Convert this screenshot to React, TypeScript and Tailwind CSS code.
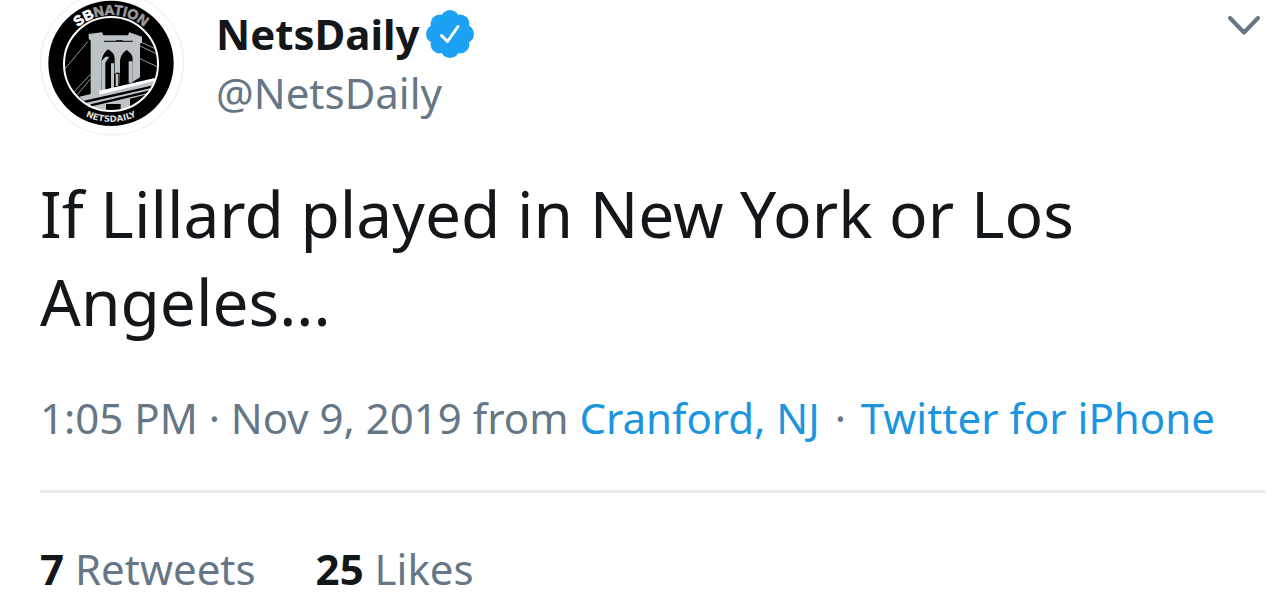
const stats = [
  { count: 7, label: "Retweets" },
  { count: 25, label: "Likes" },
];

const Avatar = () => (
  <svg
    viewBox="28 0 432 408"
    className="w-36 h-[136px] shrink-0"
    role="img"
    aria-label="NetsDaily avatar"
  >
    <defs>
      <clipPath id="inner">
        <circle cx="241" cy="192" r="140" />
      </clipPath>
      <path id="topArc" d="M91 194a150 150 0 0 1 300 0" />
      <path id="bottomArc" d="M65 190a176 176 0 0 0 352 0" />
    </defs>
    <circle cx="244" cy="190" r="214" fill="#fff" stroke="#f3f3f3" strokeWidth="5" />
    <circle cx="241" cy="190" r="188" fill="#000" />

    {/* Bridge */}
    <g clipPath="url(#inner)">
      <g stroke="#aeb4b6" strokeWidth="2.5" fill="none">
        <path d="M98 212 172 124M130 276 180 222M140 284 180 236M326 124l60 28M328 138l60 28M328 176l60 28" />
      </g>
      <path
        fill="#bcc3c7"
        d="M174 102 214 97 218 106H292L296 97 334 110V126L328 132V232L300 250H212V300H176L180 280V122L174 116z"
      />
      <path
        fill="#000"
        d="M212 272v-82c0-18 8-32 20-42 14 8 22 18 20 32v82zM268 256v-70c0-16 8-28 20-36 12 8 20 18 18 34v64z"
      />
      <path fill="#000" d="M250 222h5v-4h12v44h-17z" />
      <path fill="#bcc3c7" d="M212 184l12 -14h12l-12 18v86h-12zM241 190h9v74h-9zM255 222h8v36h-8zM294 184h12v64h-12z" />
      <path d="M220 124h86M256 122h20" stroke="#222" strokeWidth="4" />
      <path fill="#bcc3c7" d="M146 290 390 232v96L300 352H210z" />
      <path fill="#fff" d="M206 272 390 230v8L206 284z" />
      <path d="M160 306 392 254M180 316 392 266" stroke="#000" strokeWidth="7" />
      <path d="M226 312h44v30h-44zM298 296l54 -14v18l-54 22z" fill="#000" />
    </g>
    <circle cx="241" cy="192" r="141" fill="none" stroke="#fff" strokeWidth="6" />

    <text
      fontSize="42"
      className="font-['Liberation_Sans',sans-serif] font-bold"
      textAnchor="middle"
    >
      <textPath href="#topArc" startOffset="50%">
        <tspan fill="#fff" stroke="#fff" strokeWidth="2">SB</tspan>
        <tspan fill="#999" stroke="#999" strokeWidth="2">NATION</tspan>
      </textPath>
    </text>
    <text
      fontSize="26"
      fill="#ddd"
      className="font-['DejaVu_Sans',sans-serif] font-bold"
      textAnchor="middle"
    >
      <textPath href="#bottomArc" startOffset="50%">
        NETSDAILY
      </textPath>
    </text>
  </svg>
);

const VerifiedBadge = () => (
  <svg viewBox="0 0 48 48" className="size-12" role="img" aria-label="Verified account">
    <g fill="#1da1f2">
      <circle cx="24" cy="24" r="18" />
      <circle cx="24" cy="9.5" r="9.5" />
      <circle cx="34" cy="14" r="9.5" />
      <circle cx="38.5" cy="24" r="9.5" />
      <circle cx="34" cy="34" r="9.5" />
      <circle cx="24" cy="38.5" r="9.5" />
      <circle cx="14" cy="34" r="9.5" />
      <circle cx="9.5" cy="24" r="9.5" />
      <circle cx="14" cy="14" r="9.5" />
    </g>
    <path
      d="M15.5 25.5 21.5 31.5 32 16.5"
      fill="none"
      stroke="#fff"
      strokeWidth="3"
      strokeLinecap="round"
      strokeLinejoin="round"
    />
  </svg>
);

const App = () => {
  return (
    <article className="bg-white pl-10 pr-3.5 pb-3.5 font-['Noto_Sans',sans-serif] text-[#14171a]">
      {/* Author */}
      <header className="flex items-start">
        <Avatar />
        <div className="flex-1 pl-8 pt-1 text-[42px] leading-[59px]">
          <div className="flex items-center gap-1.5">
            <a href="#profile" className="font-bold">
              NetsDaily
            </a>
            <VerifiedBadge />
          </div>
          <a href="#profile" className="block text-[#657786]">
            @NetsDaily
          </a>
        </div>
        <button type="button" aria-label="More options" className="pt-4 pr-1.5">
          <svg viewBox="0 0 32 19" className="w-8 h-[19px]">
            <path
              d="M2 2 16 16.5 30 2"
              fill="none"
              stroke="#657786"
              strokeWidth="4"
              strokeLinecap="round"
              strokeLinejoin="round"
            />
          </svg>
        </button>
      </header>

      <p className="mt-8.5 text-[64px] leading-[88px]">
        If Lillard played in New York or Los Angeles...
      </p>

      <p className="mt-11 text-[42px] leading-[56px] text-[#657786] whitespace-nowrap">
        1:05 PM · Nov 9, 2019 from{" "}
        <a href="#place" className="text-[#1b95e0]">
          Cranford, NJ
        </a>{" "}
        <span className="mx-1">·</span>{" "}
        <a href="#source" className="text-[#1b95e0]">
          Twitter for iPhone
        </a>
      </p>

      {/* Stats */}
      <footer className="mt-11 pt-12 flex gap-15 border-t-3 border-[#e6ecf0] text-[42px] leading-[56px]">
        {stats.map((stat) => (
          <a key={stat.label} href="#stats" className="text-[#657786]">
            <span className="font-bold text-[#14171a]">{stat.count}</span> {stat.label}
          </a>
        ))}
      </footer>
    </article>
  );
};

export default App;
